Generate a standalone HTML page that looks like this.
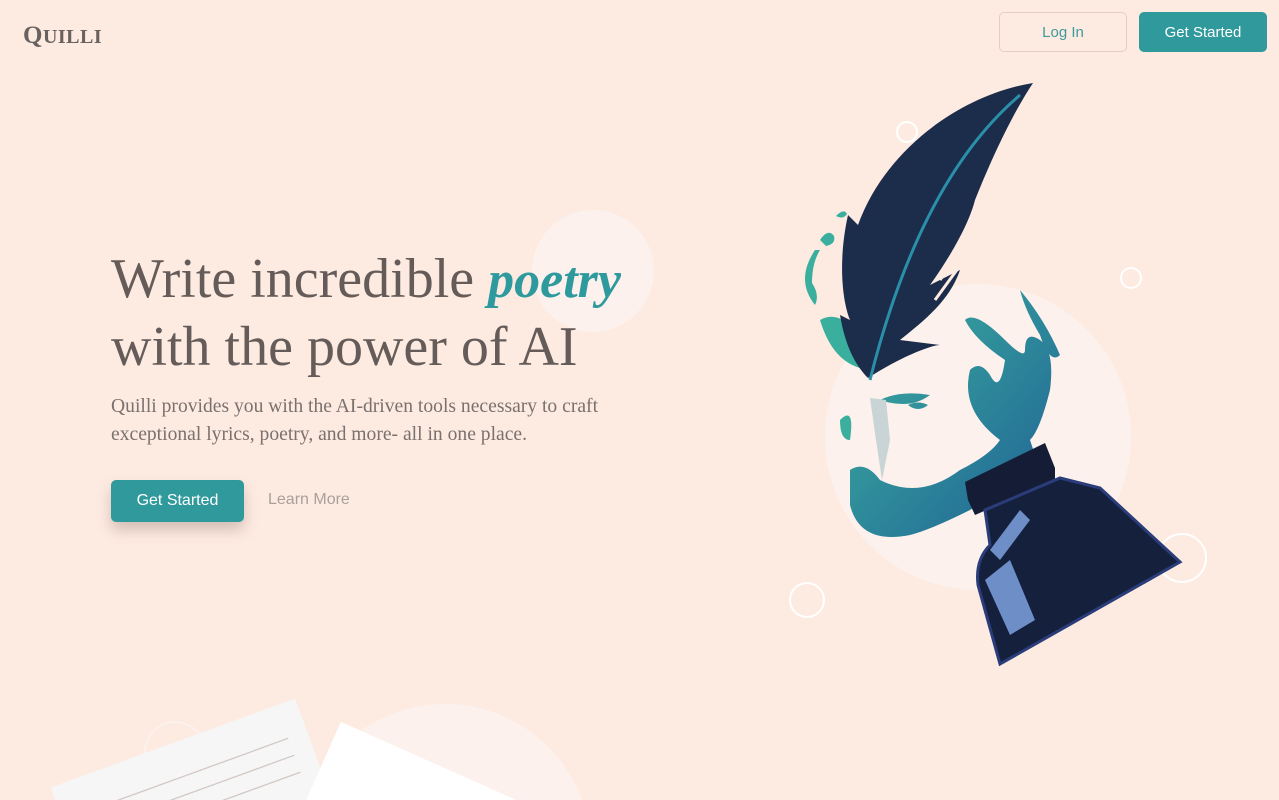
<!DOCTYPE html>
<html><head><meta charset="utf-8"><style>
*{margin:0;padding:0;box-sizing:border-box}
html,body{width:1279px;height:800px;overflow:hidden}
body{background:#fdebe2;position:relative;font-family:"Liberation Sans",sans-serif}
.logo{position:absolute;left:23px;top:22px;font-family:"Liberation Serif",serif;font-size:25px;color:#6a625f;font-weight:bold;letter-spacing:0.5px}
.logo small{font-size:20px}
.btn{position:absolute;display:flex;align-items:center;justify-content:center;border-radius:5px;font-size:15px}
.login{left:999px;top:12px;width:128px;height:40px;border:1px solid #e6cdc4;color:#3d9a9c}
.gs{left:1139px;top:12px;width:128px;height:40px;background:#30999c;color:#fff}
h1{position:absolute;left:111px;top:246px;font-family:"Liberation Serif",serif;font-weight:normal;font-size:56px;line-height:66px;color:#655c59;letter-spacing:0}
h1 em{font-family:"Liberation Serif",serif;font-style:italic;font-weight:bold;color:#2f9a9e;font-size:52px;letter-spacing:0}
p{position:absolute;left:111px;top:393px;font-family:"Liberation Serif",serif;font-size:19.6px;line-height:28px;color:#7a706d}
.gs2{left:111px;top:480px;width:133px;height:42px;background:#30999c;color:#fff;font-size:16px;box-shadow:0 8px 14px rgba(120,90,80,.3)}
.lm{position:absolute;left:268px;top:491px;font-size:16px;color:#a9a09c}
svg{position:absolute;left:0;top:0}
</style></head><body>
<svg width="1279" height="800" viewBox="0 0 1279 800">
<defs>
<linearGradient id="ink" x1="0" y1="0" x2="1" y2="1"><stop offset="0" stop-color="#3cb39f"/><stop offset="1" stop-color="#1f5f95"/></linearGradient>
</defs>
<circle cx="593" cy="271" r="61" fill="#fcf1ec"/>
<circle cx="978" cy="437" r="153" fill="#fcf1ec"/>
<circle cx="445" cy="850" r="146" fill="#fcf1ec"/>
<circle cx="175" cy="752" r="30" fill="none" stroke="#fcf1ec" stroke-width="2"/>
<g fill="none" stroke="#fff" stroke-width="2">
<circle cx="907" cy="132" r="10"/><circle cx="1131" cy="278" r="10"/><circle cx="807" cy="600" r="17"/><circle cx="1182" cy="558" r="24"/></g>
<path d="M836 216 q8-8 11-2 q-4 6-11 2z M820 240 q8-12 14-4 q2 8-8 10z M815 250 q-20 30 0 55 q5-10-3-22 q0-20 8-33z M820 320 q20-12 45 20 l10 30 q-40 0-55-50z M840 420 q15-15 10 20 q-10 0-10-20z" fill="#3aaf9d"/>
<path d="M850 470 q15-10 30 10 q40 20 80-10 q30-15 40-30 q-40-30-30-70 q10-10 20 5 q10 20 15-15 q-30-20-40-40 q10-10 40 20 q20 20 20 10 q0-20 15-10 q15 10 10 50 q-10 40-20 50 l10 30 q-40 20-70 40 q-40 20-60 25 q-50 10-60-30z M880 400 q20-10 50-5 q-20 15-50 5z M908 405 q10-5 20 0 q-10 8-20 0z M1020 290 q25 30 40 65 q-10 10-20-20 q-15-25-20-45z" fill="url(#ink)"/>
<path d="M1033 83 C960 95 885 150 858 225 L848 215 C838 260 842 300 850 320 L840 315 C845 345 855 365 868 378 C895 360 930 345 940 345 L900 340 C925 320 950 300 960 270 L930 285 C955 250 970 220 975 200 C995 150 1015 110 1033 83z" fill="#1c2c4b"/>
<path d="M990 205 L940 280 M975 245 L935 300" stroke="#fdebe2" stroke-width="3"/>
<path d="M1020 95 Q920 180 870 380" stroke="#2a8fa8" stroke-width="3" fill="none"/>
<path d="M870 398 L886 400 L890 440 L882 480 L876 440z" fill="#c9d4d6"/>
<path d="M965 482 L1045 443 L1055 468 L1055 480 L975 515 L968 500z" fill="#151c35"/>
<path d="M985 510 L1060 478 L1100 488 L1180 562 L1000 664 L978 585 Q975 560 990 545z" fill="#15203d" stroke="#2a3d7a" stroke-width="3"/>
<path d="M990 550 L1020 510 L1030 520 L1000 560z M985 580 L1010 560 L1035 620 L1010 635z" fill="#6e8ec7"/>
<g transform="rotate(-20 190 790)"><rect x="60" y="740" width="260" height="140" fill="#f6f6f6"/>
<g stroke="#d2c8c4" stroke-width="1.3"><line x1="110" y1="775" x2="300" y2="775"/><line x1="110" y1="793" x2="300" y2="793"/><line x1="110" y1="811" x2="300" y2="811"/></g></g>
<g transform="rotate(24 420 790)"><rect x="320" y="760" width="200" height="120" fill="#fff"/></g>
</svg>
<div class="logo">Q<small>UILLI</small></div>
<div class="btn login">Log In</div>
<div class="btn gs">Get Started</div>
<h1>Write incredible <em>poetry</em><br>with the power of AI</h1>
<p>Quilli provides you with the AI-driven tools necessary to craft<br>exceptional lyrics, poetry, and more- all in one place.</p>
<div class="btn gs2">Get Started</div>
<div class="lm">Learn More</div>
</body></html>
